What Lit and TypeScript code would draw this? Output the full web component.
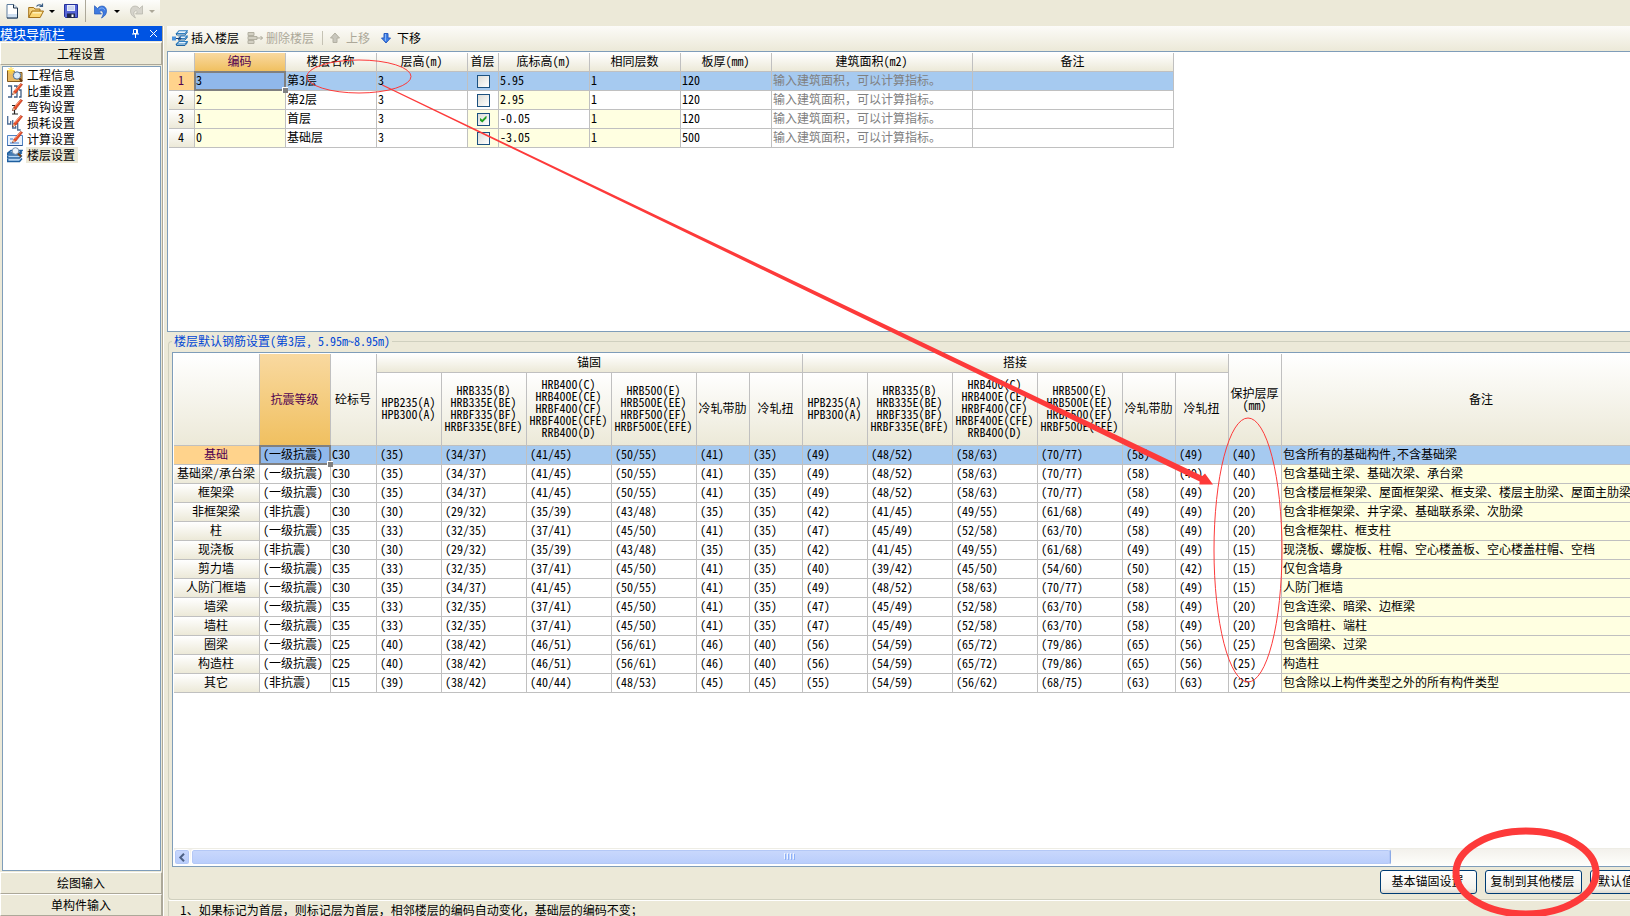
import { LitElement, html, svg, css } from "lit";
import { customElement, state } from "lit/decorators.js";
import { classMap } from "lit/directives/class-map.js";

interface Floor {
  code: string;
  name: string;
  height: string;
  first: boolean;
  base: string;
  same: string;
  slab: string;
  derived: string[];
}

const FLOOR_WIDTHS = [26, 91, 91, 91, 31, 91, 91, 91, 201, 201];
const FLOOR_HEADS = ["编码", "楼层名称", "层高(m)", "首层", "底标高(m)", "相同层数", "板厚(mm)", "建筑面积(m2)", "备注"];
const FLOORS: Floor[] = [
  { code: "3", name: "第3层", height: "3", first: false, base: "5.95", same: "1", slab: "120", derived: [] },
  { code: "2", name: "第2层", height: "3", first: false, base: "2.95", same: "1", slab: "120", derived: ["code", "base"] },
  { code: "1", name: "首层", height: "3", first: true, base: "-0.05", same: "1", slab: "120", derived: ["code", "first", "same"] },
  { code: "0", name: "基础层", height: "3", first: false, base: "-3.05", same: "1", slab: "500", derived: ["code", "first", "base", "same"] },
];

const REBAR_WIDTHS = [86, 71, 46, 65, 85, 85, 85, 53, 53, 65, 85, 85, 85, 53, 53, 53, 400];
const STEEL_HEADS = [
  ["HPB235(A)", "HPB300(A)"],
  ["HRB335(B)", "HRB335E(BE)", "HRBF335(BF)", "HRBF335E(BFE)"],
  ["HRB400(C)", "HRB400E(CE)", "HRBF400(CF)", "HRBF400E(CFE)", "RRB400(D)"],
  ["HRB500(E)", "HRB500E(EE)", "HRBF500(EF)", "HRBF500E(EFE)"],
  ["冷轧带肋"],
  ["冷轧扭"],
];
const ONE = "(一级抗震)";
const NON = "(非抗震)";
const REBAR: [string, string, string, string, string][] = [
  ["基础", ONE, "C30", "35 34/37 41/45 50/55 41 35 49 48/52 58/63 70/77 58 49 40", "包含所有的基础构件,不含基础梁"],
  ["基础梁/承台梁", ONE, "C30", "35 34/37 41/45 50/55 41 35 49 48/52 58/63 70/77 58 49 40", "包含基础主梁、基础次梁、承台梁"],
  ["框架梁", ONE, "C30", "35 34/37 41/45 50/55 41 35 49 48/52 58/63 70/77 58 49 20", "包含楼层框架梁、屋面框架梁、框支梁、楼层主肋梁、屋面主肋梁"],
  ["非框架梁", NON, "C30", "30 29/32 35/39 43/48 35 35 42 41/45 49/55 61/68 49 49 20", "包含非框架梁、井字梁、基础联系梁、次肋梁"],
  ["柱", ONE, "C35", "33 32/35 37/41 45/50 41 35 47 45/49 52/58 63/70 58 49 20", "包含框架柱、框支柱"],
  ["现浇板", NON, "C30", "30 29/32 35/39 43/48 35 35 42 41/45 49/55 61/68 49 49 15", "现浇板、螺旋板、柱帽、空心楼盖板、空心楼盖柱帽、空档"],
  ["剪力墙", ONE, "C35", "33 32/35 37/41 45/50 41 35 40 39/42 45/50 54/60 50 42 15", "仅包含墙身"],
  ["人防门框墙", ONE, "C30", "35 34/37 41/45 50/55 41 35 49 48/52 58/63 70/77 58 49 15", "人防门框墙"],
  ["墙梁", ONE, "C35", "33 32/35 37/41 45/50 41 35 47 45/49 52/58 63/70 58 49 20", "包含连梁、暗梁、边框梁"],
  ["墙柱", ONE, "C35", "33 32/35 37/41 45/50 41 35 47 45/49 52/58 63/70 58 49 20", "包含暗柱、端柱"],
  ["圈梁", ONE, "C25", "40 38/42 46/51 56/61 46 40 56 54/59 65/72 79/86 65 56 25", "包含圈梁、过梁"],
  ["构造柱", ONE, "C25", "40 38/42 46/51 56/61 46 40 56 54/59 65/72 79/86 65 56 25", "构造柱"],
  ["其它", NON, "C15", "39 38/42 40/44 48/53 45 45 55 54/59 56/62 68/75 63 63 25", "包含除以上构件类型之外的所有构件类型"],
];

const base = css`
  * { box-sizing: border-box; }
  button {
    font: inherit; color: inherit; background: none; border: 0; padding: 0; margin: 0;
  }
  svg { display: block; flex: none; }
`;

const pencil = svg`<path d="M15.5 1.5 13.5.5 7 8l-1.5 3.5L9 10z" fill="#e8502a" stroke="#a82810" stroke-width=".6"/><path d="M13.5 1 7.6 7.8" stroke="#ffa080"/><path d="M5.5 11.5 6.6 9l1.5 1.3z" fill="#f6d7a8"/><path d="m5.3 11.8.6-1.2.6.6z" fill="#222"/>`;

const ICONS: Record<string, unknown> = {
  file: svg`<path d="M3 1.5h6.5L13.500 5v10H3z" fill="#fff" stroke="#5b7a9d"/><path d="M4 11h9v3.500H4z" fill="#cfe0f2"/><path d="M9.500 1.500V5h4" fill="#dbe8f6" stroke="#234"/><path d="M13.500 5v10H3" fill="none" stroke="#1c3550"/>`,
  open: svg`<path d="M.7 14.500V4.500h5l1.300 1.500h5V8" fill="#f5d27a" stroke="#a37018"/><path d="M.7 14.500 4 8h11.500l-3.300 6.500z" fill="#fbd671" stroke="#a37018"/><path d="M5 9h9l-.7 1.500H4.300z" fill="#fff0b8"/><path d="M8.500 3.500c1.500-2 4-2 5.500-.5M14.500.5v3h-3" fill="none" stroke="#3c5f86" stroke-width="1.200"/>`,
  save: svg`<path d="M1.500 1.500h13v13h-12l-1-1z" fill="#5665d6" stroke="#24309a"/><path d="M4 2h8v6H4z" fill="#e6ecfb"/><path d="M5 4h6M5 6h6" stroke="#b6c2e8"/><path d="M4 10.500h8V15H4z" fill="#20284e"/><path d="M8.500 11.500h2V14h-2z" fill="#fff"/>`,
  undo: svg`<path d="M4.500 5.500C7.500 1.500 13.500 2.500 13.500 8c0 3-1.500 5-5 7 1.500-2.500 2.200-4.800 1.200-6.300-1-1.300-2.200-1-3.200.2L8.500 11H1.500V2.800z" fill="#3f7be0" stroke="#2358b8" stroke-width=".7"/><path d="M6 6.300c2-2 5-1.600 5.700.9" fill="none" stroke="#8db6f6"/>`,
  redo: svg`<path d="M11.500 5.500C8.500 1.500 2.500 2.500 2.500 8c0 3 1.500 5 5 7-1.500-2.500-2.200-4.800-1.200-6.300 1-1.300 2.200-1 3.200.2L7.500 11h7V2.800z" fill="#d6d4cc" stroke="#b3b1a8" stroke-width=".7"/>`,
  insert: svg`<path d="M4.500 3.500 7 .7h8.500L13 3.500zM6.500 8.500 9 6h6.500L13 8.500zM4.500 14 7 11.500h8.500L13 14z" fill="#e8f3fd" stroke="#2f7fc0" stroke-width="1.100"/><path d="M4.500 3.500V5H13l2.500-3M6.500 8.500V10H13l2.500-3M4.500 14v1.500H13l2.500-3" fill="none" stroke="#1d64a4"/><path d="M0 6.500h4v4H0z" fill="#4b93dc"/><path d="M4 8.500h4.500M7 6.500l2 2-2 2" fill="none" stroke="#1a3f78"/>`,
  remove: svg`<path d="M1 2.500h6v3H1zM1 6.500h9v3H1zM1 10.500h6v3H1z" fill="#d3d0c3" stroke="#b3b0a2"/><path d="M10 8h5.500M13.500 6l2 2-2 2" fill="none" stroke="#a9a698"/>`,
  up: svg`<path d="M8 3 12.500 8H10v4.500H6V8H3.500z" fill="#c9c7bd" stroke="#b3b0a2"/>`,
  down: svg`<path d="M8 13 12.500 8H10V3.500H6V8H3.500z" fill="#3f7fe6" stroke="#2a5cc0"/><path d="M7.500 4v7" stroke="#86b4f8"/>`,
  info: svg`<path d="M.5 3.500h6l1.500 2h7v9H.5z" fill="#e8b964" stroke="#80591e"/><path d="M4 0v7M.5 3.500h7M1.500 1l5 5M6.500 1l-5 5" stroke="#ffd83a"/><circle cx="10" cy="8.500" r="3.700" fill="#dcecfa" stroke="#4a6a90"/><path d="m12.500 11.500 2.500 3" stroke="#6a3b12" stroke-width="2"/>`,
  weight: svg`<path d="M1 3h3.500v11H1M7 3h3v11H7M12 7h2v7h-2" fill="none" stroke="#3f5f86" stroke-width="1.300"/>${pencil}`,
  hook: svg`<path d="M5 6.500h5M7.500 6.500v8.500M5 15h6M5.500 10h4" fill="none" stroke="#222" stroke-width="1.200"/>${pencil}`,
  loss: svg`<path d="M.7 1v8h3V6M5.700 5v8h3v-2M10.700 8v7h3" fill="none" stroke="#4c6c94" stroke-width="1.300"/>${pencil}`,
  calc: svg`<path d="M.5 4.500h15v10H.5z" fill="#eaf2fc" stroke="#4f83c4"/><path d="M3 8h3M3 12h9" stroke="#3f78c8"/><path d="M.5 14.500h15" stroke="#2b5796"/>${pencil}`,
  floors: svg`<path d="M.7 6 4 3.500h11L12.500 6zM.7 6v2h11.800L15 5.500M.7 9v2h11.800L15 8.500M.7 12v2.500h11.800l2.500-3" fill="#b5d6f4" stroke="#1f5f9f" stroke-width="1.400"/><circle cx="8.500" cy="4" r="3.300" fill="#eef5fc" stroke="#7a92ad"/><path d="m11 6.500 3 3" stroke="#7a4418" stroke-width="2"/>`,
};

const icon = (name: string) => html`<svg width="16" height="16" viewBox="0 0 16 16" aria-hidden="true">${ICONS[name]}</svg>`;

@customElement("quick-bar")
class QuickBar extends LitElement {
  static styles = [base, css`
    :host { display: block; height: 26px; }
    .strip {
      display: flex; align-items: center; width: 160px; height: 22px; padding-left: 4px;
      background: linear-gradient(#fdfdfb, #ece9d8);
    }
    .drop { display: flex; align-items: center; justify-content: center; width: 16px; height: 20px; }
    .drop::before { content: ""; border: 3px solid transparent; border-top-color: #000; border-bottom: 0; }
    .drop.off::before { border-top-color: #aca899; }
    .open { margin-left: 8px; }
    .save { margin-left: 3px; }
    .line { width: 1px; height: 22px; background: #aca899; margin: 0 7px 0 6px; }
    .redo { margin-left: 3px; }
  `];
  render() {
    return html`
      <div class="strip" role="toolbar">
        <button aria-label="新建">${icon("file")}</button>
        <button class="open" aria-label="打开">${icon("open")}</button>
        <button class="drop" aria-label="打开列表"></button>
        <button class="save" aria-label="保存">${icon("save")}</button>
        <span class="line"></span>
        <button aria-label="撤销">${icon("undo")}</button>
        <button class="drop" aria-label="撤销列表"></button>
        <button class="redo" aria-label="恢复" disabled>${icon("redo")}</button>
        <button class="drop off" aria-label="恢复列表" disabled></button>
      </div>`;
  }
}

@customElement("module-nav")
class ModuleNav extends LitElement {
  @state() private current = "楼层设置";
  private items = [
    ["info", "工程信息"], ["weight", "比重设置"], ["hook", "弯钩设置"],
    ["loss", "损耗设置"], ["calc", "计算设置"], ["floors", "楼层设置"],
  ];
  static styles = [base, css`
    :host { display: flex; flex-direction: column; border-right: 1px solid #aca899; }
    .title {
      display: flex; align-items: center; height: 15px; background: #0054e3; color: #fff;
      font-size: 13px; line-height: 15px; margin-bottom: 1px;
    }
    .name { flex: 1; font-weight: 400; font-size: 13px; margin: 0; }
    .mini { width: 18px; height: 15px; display: flex; align-items: center; justify-content: center; }
    .section {
      height: 22px; border: 1px solid #aca899; border-top-color: #fff; border-left-color: #fff;
      text-align: center; background: #ece9d8; flex: none;
    }
    .first { height: 23px; margin-bottom: 1px; }
    .list {
      flex: 1; background: #fff; border: 1px solid #7f9db9; margin: 0 1px 1px 2px; padding: 0 0 0 4px;
      display: flex; flex-direction: column; align-items: flex-start;
    }
    .item { display: flex; align-items: center; gap: 3px; height: 16px; }
    .label { padding: 0 3px 0 1px; height: 16px; line-height: 16px; }
    .on .label { background: #ece9d8; }
  `];
  render() {
    return html`
      <div class="title">
        <h2 class="name">模块导航栏</h2>
        <button class="mini" aria-label="固定"><svg width="9" height="9" viewBox="0 0 9 9"><path d="M2.500.5h4v4h-4zM5.500.5v4M1 5h7M4.500 5v4" fill="none" stroke="#fff"/></svg></button>
        <button class="mini" aria-label="关闭"><svg width="9" height="9" viewBox="0 0 9 9"><path d="m1 1 7 7M8 1 1 8" fill="none" stroke="#fff"/></svg></button>
      </div>
      <button class="section first">工程设置</button>
      <nav class="list">
        ${this.items.map(([ic, text]) => html`
          <button class=${classMap({ item: true, on: text === this.current })} @click=${() => (this.current = text)}>
            ${icon(ic)}<span class="label">${text}</span>
          </button>`)}
      </nav>
      <button class="section">绘图输入</button>
      <button class="section">单构件输入</button>`;
  }
}

const grid = css`
  table { table-layout: fixed; border-collapse: separate; border-spacing: 0; width: 0; }
  th, td {
    height: 19px; padding: 0 2px 2px 1px; border: 0 solid #c0c0c0; border-width: 0 1px 1px 0; overflow: hidden;
    white-space: nowrap; font-weight: 400; line-height: 12px; text-align: left; background: #fff;
  }
  th { text-align: center; padding: 0 1px 2px 0; background: linear-gradient(#fff, #ece9d8); }
  th.active { background: linear-gradient(#f9d9a0, #f0c060); color: #500050; }
  .chosen th { background: #ffd38c; color: #500050; }
  td.calc { background: #ffffe1; }
  .chosen td { background: #a6caf0; }
  .chosen td.cursor { background: #90b8eb; position: relative; overflow: visible; }
  .cursor::before { content: ""; position: absolute; inset: -1px; border: 2px solid #808080; }
  .cursor::after {
    content: ""; position: absolute; right: -3px; bottom: -3px; width: 5px; height: 5px;
    background: #808080; border: 0 solid #fff; border-width: 1px 0 0 1px;
  }
`;

const cols = (widths: number[]) => html`
  <colgroup>${widths.map((w) => html`<col style="width:${w}px" />`)}</colgroup>`;

@customElement("floor-grid")
class FloorGrid extends LitElement {
  static styles = [base, grid, css`
    :host { display: flex; flex-direction: column; min-height: 0; }
    .bar {
      display: flex; align-items: center; height: 25px; padding: 0 0 2px 5px; flex: none;
      background: linear-gradient(#fcfbf8, #ece9d8);
    }
    .cmd { display: flex; align-items: center; gap: 3px; white-space: nowrap; }
    .cmd + .cmd { margin-left: 8px; }
    .off { color: #aca899; }
    .line { width: 1px; height: 14px; background: #c5c2b4; margin: 0 4px 0 8px; }
    .box {
      flex: 1; min-height: 0; overflow: hidden; background: #fff; padding: 1px 0 0 1px;
      border: 1px solid #7f9db9; border-right: 0;
    }
    td.tick { text-align: center; padding: 0; }
    td.hint { color: #808080; font-feature-settings: normal; }
    .check {
      appearance: none; display: block; width: 13px; height: 13px; margin: 0 auto;
      border: 1px solid #1c5180; background: linear-gradient(135deg, #dcdcd7, #fff);
    }
    .check:checked::before {
      content: ""; display: block; width: 7px; height: 7px; margin: 2px; background: #21a121;
      clip-path: polygon(0 30%, 40% 62%, 100% 0, 100% 40%, 40% 100%, 0 68%);
    }
  `];
  render() {
    return html`
      <div class="bar" role="toolbar">
        <button class="cmd">${icon("insert")}<span>插入楼层</span></button>
        <button class="cmd off" disabled>${icon("remove")}<span>删除楼层</span></button>
        <span class="line"></span>
        <button class="cmd off" disabled>${icon("up")}<span>上移</span></button>
        <button class="cmd">${icon("down")}<span>下移</span></button>
      </div>
      <div class="box">
        <table>
          ${cols(FLOOR_WIDTHS)}
          <thead><tr><th></th>${FLOOR_HEADS.map((h, i) => html`<th scope="col" class=${classMap({ active: i === 0 })}>${h}</th>`)}</tr></thead>
          <tbody>
            ${FLOORS.map((f, i) => {
              const c = (key: string) => classMap({ calc: f.derived.includes(key), cursor: i === 0 && key === "code", tick: key === "first" });
              return html`
                <tr class=${classMap({ chosen: i === 0 })}>
                  <th scope="row">${i + 1}</th>
                  <td class=${c("code")}>${f.code}</td>
                  <td>${f.name}</td>
                  <td>${f.height}</td>
                  <td class=${c("first")}><input class="check" type="checkbox" aria-label=${f.name + " 首层"} .checked=${f.first} /></td>
                  <td class=${c("base")}>${f.base}</td>
                  <td class=${c("same")}>${f.same}</td>
                  <td>${f.slab}</td>
                  <td class="hint">输入建筑面积，可以计算指标。</td>
                  <td></td>
                </tr>`;
            })}
          </tbody>
        </table>
      </div>`;
  }
}

@customElement("rebar-panel")
class RebarPanel extends LitElement {
  static styles = [base, grid, css`
    :host { display: flex; min-height: 0; min-width: 0; }
    .group {
      flex: 1; min-width: 0; margin: 0 0 0 1px; padding: 4px 0 0 3px; display: flex; flex-direction: column;
      border: 1px solid #d0d0bf; border-right: 0; border-radius: 4px 0 0 4px;
    }
    legend { padding: 0 2px; color: #0046d5; height: 14px; line-height: 14px; }
    .box {
      flex: 1; min-height: 0; background: #fff; border: 1px solid #7f9db9; border-right: 0;
      padding: 1px 0 1px 1px; display: flex; flex-direction: column; overflow: hidden;
    }
    .view { flex: 1; min-height: 0; overflow: hidden; }
    .steel th { height: 73px; }
    .line { display: block; }
    td.pad { padding-left: 3px; }
    .scroll {
      display: flex; flex: none; height: 17px; background: linear-gradient(#f3f1ec, #fefefb); border-top: 1px solid #eeede5;
    }
    .arrow, .thumb {
      display: flex; align-items: center; justify-content: center; border: 1px solid #fff; border-radius: 3px;
      background: linear-gradient(#c9d8fc, #b9cdfb); box-shadow: inset 0 0 0 1px #b4c8f6;
    }
    .arrow { width: 16px; margin-right: 1px; }
    .thumb { flex: 5; border-right-color: #8caae6; gap: 1px; }
    .rest { flex: 1; }
    .grip { width: 1px; height: 6px; background: #8cb0f8; box-shadow: -1px -1px 0 #eef4fe; margin-right: 1px; }
    .actions { display: flex; justify-content: flex-end; gap: 8px; padding: 3px 0 5px; margin-right: -57px; flex: none; }
    .push {
      width: 97px; height: 24px; border: 1px solid #003c74; border-radius: 3px; white-space: nowrap; padding: 0 2px 2px 0;
      background: linear-gradient(#fff, #f3f2ec 80%, #dedad0);
    }
    .left { text-align: left; padding-left: 7px; }
  `];
  render() {
    const heads = [...STEEL_HEADS, ...STEEL_HEADS];
    return html`
      <fieldset class="group">
        <legend>楼层默认钢筋设置(第3层, 5.95m~8.95m)</legend>
        <div class="box">
          <div class="view">
            <table>
              ${cols(REBAR_WIDTHS)}
              <thead>
                <tr>
                  <th rowspan="2"></th>
                  <th rowspan="2" scope="col" class="active">抗震等级</th>
                  <th rowspan="2" scope="col">砼标号</th>
                  <th colspan="6" scope="colgroup">锚固</th>
                  <th colspan="6" scope="colgroup">搭接</th>
                  <th rowspan="2" scope="col"><span class="line">保护层厚</span><span class="line">(mm)</span></th>
                  <th rowspan="2" scope="col">备注</th>
                </tr>
                <tr class="steel">
                  ${heads.map((lines) => html`<th scope="col">${lines.map((l) => html`<span class="line">${l}</span>`)}</th>`)}
                </tr>
              </thead>
              <tbody>
                ${REBAR.map(([part, grade, concrete, values, note], i) => html`
                  <tr class=${classMap({ chosen: i === 0 })}>
                    <th scope="row">${part}</th>
                    <td class=${classMap({ pad: true, cursor: i === 0 })}>${grade}</td>
                    <td>${concrete}</td>
                    ${values.split(" ").map((v) => html`<td class="pad">(${v})</td>`)}
                    <td class="calc">${note}</td>
                  </tr>`)}
              </tbody>
            </table>
          </div>
          <div class="scroll">
            <button class="arrow" aria-label="向左滚动"><svg width="8" height="9" viewBox="0 0 8 9"><path d="M6 .8 2.300 4.500 6 8.200" fill="none" stroke="#4d6185" stroke-width="2"/></svg></button>
            <div class="thumb"><i class="grip"></i><i class="grip"></i><i class="grip"></i><i class="grip"></i></div>
            <div class="rest"></div>
          </div>
        </div>
        <div class="actions">
          <button class="push">基本锚固设置</button>
          <button class="push">复制到其他楼层</button>
          <button class="push left">默认值</button>
        </div>
      </fieldset>`;
  }
}

@customElement("app-root")
class AppRoot extends LitElement {
  static styles = [base, css`
    :host {
      display: flex; flex-direction: column; position: relative; height: 100vh; overflow: hidden;
      background: #ece9d8; color: #000; font: 12px/14px "Noto Sans CJK SC", sans-serif;
      font-feature-settings: "hwid";
    }
    .body { flex: 1; min-height: 0; display: flex; }
    module-nav { width: 163px; flex: none; }
    .split { width: 4px; flex: none; border-left: 1px solid #fff; }
    .main { flex: 1; min-width: 0; display: flex; flex-direction: column; }
    floor-grid { flex: 1 1 23px; }
    rebar-panel { flex: 2 1 0px; margin-top: 2px; }
    .notes {
      flex: none; height: 16px; margin: 0 0 0 1px; padding: 2px 0 0 11px;
      border-left: 1px solid #d0d0bf; border-top: 1px solid #fff; white-space: nowrap;
      line-height: 13px; font-feature-settings: normal;
    }
    .ink { position: absolute; left: 0; top: 0; pointer-events: none; }
  `];
  render() {
    return html`
      <quick-bar></quick-bar>
      <div class="body">
        <module-nav></module-nav>
        <div class="split"></div>
        <main class="main">
          <floor-grid></floor-grid>
          <rebar-panel></rebar-panel>
          <p class="notes">1、如果标记为首层，则标记层为首层，相邻楼层的编码自动变化，基础层的编码不变；</p>
        </main>
      </div>
      <svg class="ink" width="1630" height="916" viewBox="0 0 1630 916" aria-hidden="true">
        <g fill="none" stroke="#fd3a3a">
          <ellipse cx="359" cy="76.500" rx="52" ry="16.500"/>
          <ellipse cx="1248" cy="550" rx="34" ry="132"/>
          <ellipse cx="1526" cy="872.500" rx="70" ry="41.500" stroke-width="7"/>
        </g>
        <path d="M382.500 84.500 1202.300 476 1205 473.500 1213 484.500 1199.400 484.600 1199.700 481.400 382 85.500z" fill="#fd3a3a"/>
      </svg>`;
  }
}
